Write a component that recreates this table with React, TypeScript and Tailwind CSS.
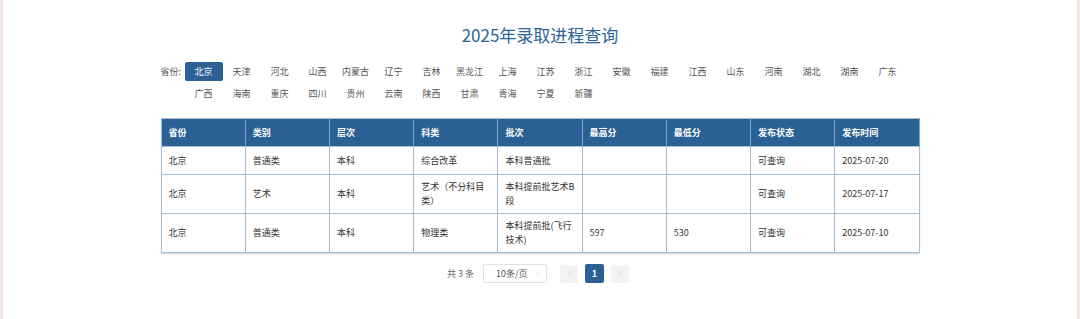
import { ChevronDown, ChevronLeft, ChevronRight } from "lucide-react";

const provinces = [
  "北京", "天津", "河北", "山西", "内蒙古", "辽宁", "吉林", "黑龙江", "上海", "江苏",
  "浙江", "安徽", "福建", "江西", "山东", "河南", "湖北", "湖南", "广东", "广西",
  "海南", "重庆", "四川", "贵州", "云南", "陕西", "甘肃", "青海", "宁夏", "新疆",
];

const columns = ["省份", "类别", "层次", "科类", "批次", "最高分", "最低分", "发布状态", "发布时间"];

const rows = [
  ["北京", "普通类", "本科", "综合改革", "本科普通批", "", "", "可查询", "2025-07-20"],
  ["北京", "艺术", "本科", "艺术（不分科目类）", "本科提前批艺术B段", "", "", "可查询", "2025-07-17"],
  ["北京", "普通类", "本科", "物理类", "本科提前批(飞行技术)", "597", "530", "可查询", "2025-07-10"],
];

export default function App() {
  return (
    <div className="flex h-[319px] w-full bg-white font-['Noto_Sans_CJK_SC',sans-serif] text-[#333]">
      <div className="w-[3px] bg-[#f1e5e5]" />
      <div className="flex-1">
        <div className="mx-auto w-[759px]">
          <h1 className="pt-[23px] text-center text-[17px] leading-[24px] text-[#2c6399]">
            2025年录取进程查询
          </h1>

          <div className="mt-[15px] flex">
            <span className="w-[24px] text-[9px] leading-[19px] text-[#555]">省份:</span>
            <ul className="flex flex-1 flex-wrap gap-y-[3px]">
              {provinces.map((p, i) => (
                <li
                  key={p}
                  className={
                    i === 0
                      ? "flex h-[19px] w-[38px] items-center justify-center rounded-[2px] bg-[#2a6094] text-[9px] text-white"
                      : "flex h-[19px] w-[38px] items-center justify-center text-[9px] text-[#555]"
                  }
                >
                  {p}
                </li>
              ))}
            </ul>
          </div>

          <table className="mt-[15px] w-full table-fixed border-collapse border border-[#a9bdd3] text-[9px] leading-[14px] shadow-[0_1px_1px_rgba(80,110,150,0.25)]">
            <thead>
              <tr className="h-[28px] bg-[#2a6094]">
                {columns.map((c) => (
                  <th key={c} className="border-r border-[#7fa0c2] px-[7px] text-left font-bold text-white">
                    {c}
                  </th>
                ))}
              </tr>
            </thead>
            <tbody>
              {rows.map((r, i) => (
                <tr key={i} className="h-[28px]">
                  {r.map((v, j) => (
                    <td key={j} className="border border-[#a9bdd3] px-[7px] py-[5px] align-middle">
                      {v}
                    </td>
                  ))}
                </tr>
              ))}
            </tbody>
          </table>

          <div className="mt-[11px] flex items-center justify-center pr-[4px] text-[9px]">
            <span className="text-[#666]">共 3 条</span>
            <div className="ml-[9px] flex h-[19px] w-[64px] items-center justify-between rounded-[2px] border border-[#e2e2e2] pl-[12px] pr-[4px] text-[#555]">
              <span>10条/页</span>
              <ChevronDown size={9} strokeWidth={1.2} className="text-[#bbb]" />
            </div>
            <button className="ml-[13px] flex h-[18px] w-[18px] items-center justify-center rounded-[2px] bg-[#f2f2f3] text-[#c0c4cc]">
              <ChevronLeft size={9} strokeWidth={1.5} />
            </button>
            <button className="ml-[7px] flex h-[19px] w-[19px] items-center justify-center rounded-[2px] bg-[#2a6094] font-bold text-white">
              1
            </button>
            <button className="ml-[7px] flex h-[18px] w-[18px] items-center justify-center rounded-[2px] bg-[#f2f2f3] text-[#c0c4cc]">
              <ChevronRight size={9} strokeWidth={1.5} />
            </button>
          </div>
        </div>
      </div>
      <div className="w-[3px] bg-[#f1e5e5]" />
    </div>
  );
}
